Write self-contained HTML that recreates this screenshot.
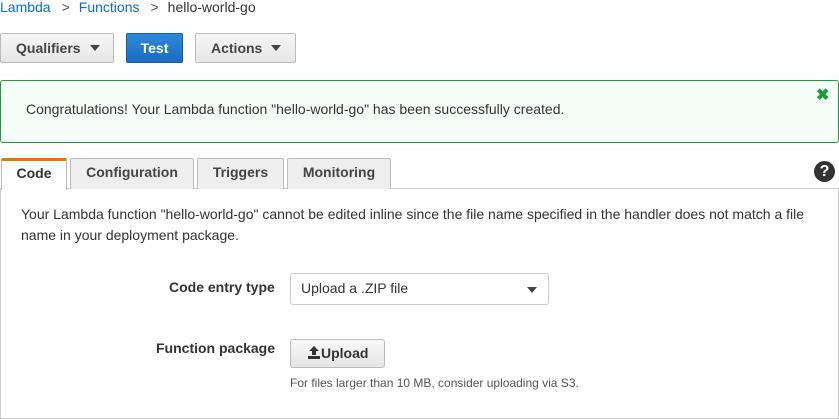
<!DOCTYPE html>
<html><head><style>
body{margin:0;width:839px;height:419px;background:#fff;font-family:"Liberation Sans",sans-serif;color:#333;position:relative;overflow:hidden}
.a{position:absolute}
.btn{position:absolute;top:33px;height:30px;box-sizing:border-box;border:1px solid #bbb;border-radius:2px;background:linear-gradient(#f7f7f7,#e6e6e6);font-weight:bold;font-size:14px;line-height:28px;color:#444;text-align:left}
.car{display:inline-block;width:0;height:0;border-left:5px solid transparent;border-right:5px solid transparent;border-top:6px solid #444;vertical-align:middle;margin-left:9px;margin-top:-3px}
.tab{position:absolute;top:158px;height:31px;box-sizing:border-box;border:1px solid #bbb;border-bottom:none;background:#eee;font-weight:bold;font-size:14px;text-align:center;line-height:27px;color:#444;border-radius:2px 2px 0 0}
</style></head><body>
<div class="a" style="left:0;top:-1px;font-size:14px"><span style="color:#0d6dc7">Lambda</span><span style="color:#555;margin:0 9px 0 11px">&gt;</span><span style="color:#0d6dc7">Functions</span><span style="color:#555;margin:0 9px 0 11px">&gt;</span><span style="color:#333">hello-world-go</span></div>
<div class="btn" style="left:0;width:114px;padding-left:15px">Qualifiers<span class="car"></span></div>
<div class="btn" style="left:126px;width:57px;background:linear-gradient(#2f89dc,#1a6dc0);border-color:#165da3;color:#fff;text-align:center">Test</div>
<div class="btn" style="left:195px;width:101px;padding-left:15px">Actions<span class="car"></span></div>
<div class="a" style="left:0;top:80px;width:839px;height:63px;box-sizing:border-box;border:1px solid #1f9d3a;border-radius:3px;background:#f6fcf7"></div>
<div class="a" style="left:26px;top:101px;font-size:14px">Congratulations! Your Lambda function "hello-world-go" has been successfully created.</div>
<div class="a" style="left:816px;top:85px;color:#1e9c3c;font-size:16px;font-weight:bold">✖</div>
<div class="a" style="left:0;top:188px;width:839px;height:231px;box-sizing:border-box;border:1px solid #ccc"></div>
<div class="tab" style="left:1px;width:66px;background:#fff;border-top:3px solid #e07b00;height:32px;line-height:25px;color:#333">Code</div>
<div class="tab" style="left:70px;width:124px">Configuration</div>
<div class="tab" style="left:197px;width:87px">Triggers</div>
<div class="tab" style="left:287px;width:104px">Monitoring</div>
<div class="a" style="left:814px;top:161px;width:21px;height:21px;border-radius:50%;background:#333;color:#fff;font-weight:bold;font-size:16px;text-align:center;line-height:21px">?</div>
<div class="a" style="left:21px;top:204px;width:800px;font-size:14px;line-height:21px">Your Lambda function "hello-world-go" cannot be edited inline since the file name specified in the handler does not match a file name in your deployment package.</div>
<div class="a" style="left:169px;top:279px;font-size:14px;font-weight:bold">Code entry type</div>
<div class="a" style="left:290px;top:273px;width:259px;height:32px;box-sizing:border-box;border:1px solid #ccc;border-radius:3px;font-size:14px;line-height:29px;padding-left:10px">Upload a .ZIP file<span style="position:absolute;right:11px;top:13px;border-left:5px solid transparent;border-right:5px solid transparent;border-top:6px solid #444"></span></div>
<div class="a" style="left:156px;top:340px;font-size:14px;font-weight:bold">Function package</div>
<div class="a" style="left:290px;top:339px;width:95px;height:29px;box-sizing:border-box;border:1px solid #bbb;border-radius:3px;background:linear-gradient(#f7f7f7,#e6e6e6);font-size:14px;font-weight:bold;line-height:26px;padding-left:16px;color:#333"><svg width="14" height="14" viewBox="0 0 14 14" style="vertical-align:-1px"><path d="M7 1 L12 6 H9 V10 H5 V6 H2 Z" fill="#333"/><rect x="1" y="11" width="12" height="3" fill="#333"/></svg>Upload</div>
<div class="a" style="left:290px;top:376px;font-size:12px;color:#555">For files larger than 10 MB, consider uploading via S3.</div>
</body></html>
